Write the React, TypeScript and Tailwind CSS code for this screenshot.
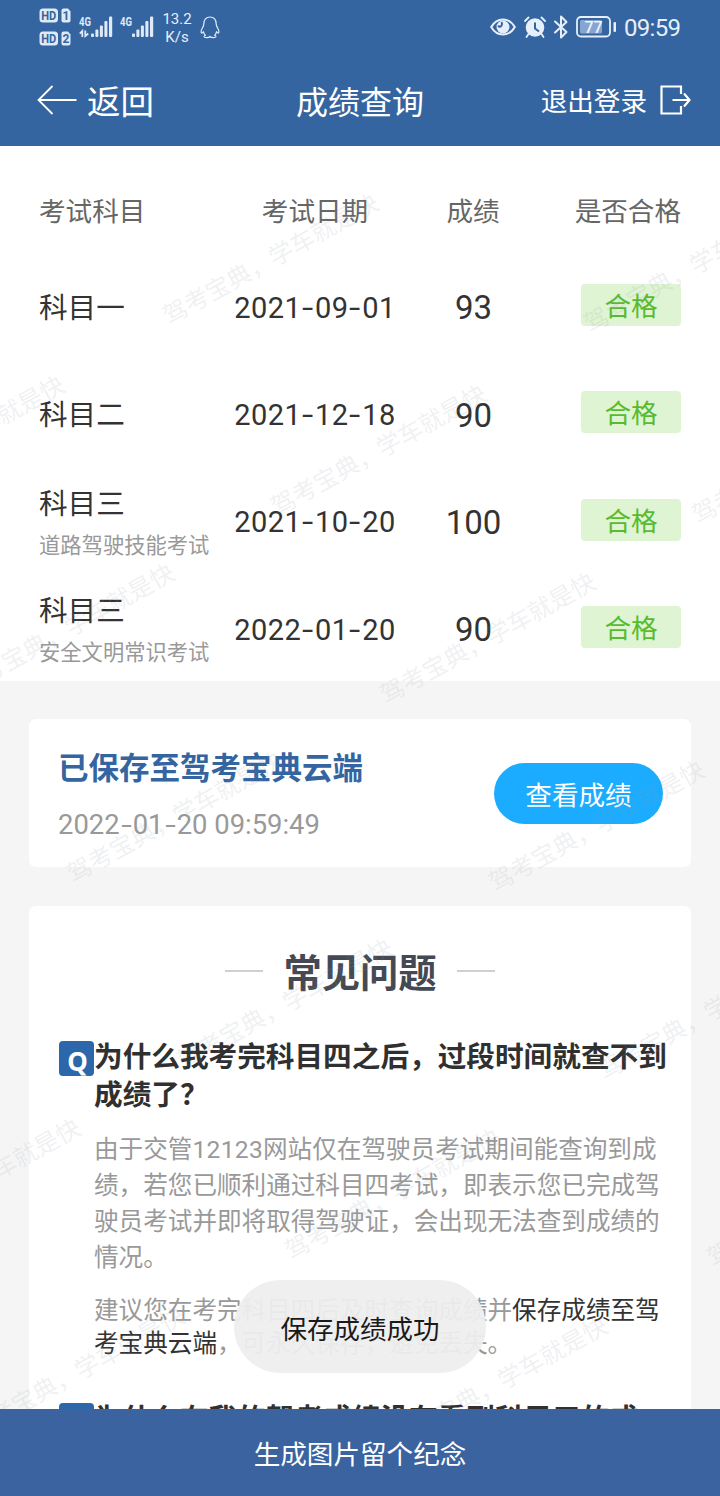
import { Fragment } from 'react';

const results = [
  { subject: '科目一', date: '2021-09-01', score: 93 },
  { subject: '科目二', date: '2021-12-18', score: 90 },
  { subject: '科目三', note: '道路驾驶技能考试', date: '2021-10-20', score: 100 },
  { subject: '科目三', note: '安全文明常识考试', date: '2022-01-20', score: 90 },
];

// Centre points of the repeated watermark text
const watermarks = [
  [270, 258], [691, 266], [-44, 440], [378, 449], [799, 457],
  [66, 628], [487, 637], [174, 816], [596, 825], [284, 1003],
  [705, 1013], [-28, 1183], [392, 1193], [814, 1200], [76, 1371], [499, 1381],
];

function HdBadge({ sim }: { sim: string }) {
  return (
    <svg width="33" height="15" viewBox="0 0 33 15" className="font-['Roboto',sans-serif] font-bold">
      <rect x="0.5" y="0.5" width="18.5" height="14" rx="3.5" fill="#dfe9f7" />
      <text x="2.3" y="12" fontSize="12.5" textLength="15" lengthAdjust="spacingAndGlyphs" fill="#3565a0">HD</text>
      <path d="M24.5 0.5h4.5l2.5 3v9a2 2 0 0 1-2 2h-5a2 2 0 0 1-2-2v-10a2 2 0 0 1 2-2z" fill="#dfe9f7" />
      <text x="27" y="12" fontSize="12" textAnchor="middle" fill="#3565a0">{sim}</text>
    </svg>
  );
}

function Signal({ data }: { data?: boolean }) {
  return (
    <svg width="35" height="24" viewBox="0 0 35 24" className="font-['Roboto',sans-serif] font-bold" fill="#dfe9f7">
      <text x="0" y="10.5" fontSize="12.5" textLength="12" lengthAdjust="spacingAndGlyphs">4G</text>
      {data && (
        <path d="M3.300 22v-6L0.800 18.600M6.300 15.500v5.500l3-2.500" fill="none" stroke="#dfe9f7" strokeWidth="1.800" />
      )}
      <rect x="12" y="18.5" width="3" height="3.5" rx="1" />
      <rect x="16.4" y="14.5" width="3" height="7.5" rx="1" />
      <rect x="20.9" y="10.5" width="3" height="11.5" rx="1" />
      <rect x="25.4" y="6" width="3" height="16" rx="1" />
      <rect x="30" y="1.5" width="3.2" height="20.5" rx="1" />
    </svg>
  );
}

function StatusBar() {
  return (
    <div className="flex h-[56px] items-start justify-between px-[39px] text-[#e6effa]">
      <div className="flex">
        <div className="mt-[8px] flex flex-col gap-[8px]">
          <HdBadge sim="1" />
          <HdBadge sim="2" />
        </div>
        <div className="ml-[7px] mt-[15px] flex gap-[6px]">
          <Signal data />
          <Signal />
        </div>
        <div className="ml-[7px] mt-[10px] w-[30px] whitespace-nowrap text-center font-['Roboto',sans-serif] text-[15px] leading-[18px]">
          13.2
          <br />
          K/s
        </div>
        <svg width="20" height="24" viewBox="0 0 20 24" className="ml-[8px] mt-[16px]" fill="none" stroke="#dfe9f7" strokeWidth="1.2" strokeLinejoin="round">
          <path d="M10 1C6 1 3.800 3.800 3.800 8c0 1.600-.6 2.600-1.400 4C1.400 13.800.800 16.200 1.500 17c.5.4 1.300-.6 1.900-1.300.3 1.700 1 2.800 2 3.700-1 .3-1.500.9-1.300 1.500.4 1.100 4.400 1 5.900-.4 1.500 1.400 5.500 1.500 5.900.4.2-.6-.3-1.200-1.300-1.500 1-.9 1.700-2 2-3.700.6.700 1.400 1.700 1.900 1.300.7-.8.1-3.200-.9-5-.8-1.400-1.400-2.400-1.400-4 0-4.200-2.200-7-6.200-7z" />
        </svg>
      </div>

      <div className="mt-[14px] flex h-[26px] items-center">
        <svg width="26" height="18" viewBox="0 0 26 18" fill="none" stroke="#e6effa" strokeWidth="2">
          <path d="M1.200 9C7-1 19-1 24.800 9 19 19 7 19 1.200 9z" />
          <circle cx="13" cy="9" r="6.500" fill="#e6effa" stroke="none" />
          <path d="M11.800 4.800a2.600 2.600 0 0 1-3.300 3.600" strokeWidth="2" stroke="#3565a0" strokeLinecap="round" />
        </svg>
        <svg width="22" height="22" viewBox="0 0 22 22" className="ml-[8px]" fill="#e6effa">
          <circle cx="11" cy="11.5" r="9.3" />
          <path d="M1 5 4.500 1.500M21 5l-3.500-3.500M4.500 18l-2 3M17.500 18l2 3" stroke="#e6effa" strokeWidth="1.8" strokeLinecap="round" />
          <path d="M11 6.500v6l4 3" fill="none" stroke="#3565a0" strokeWidth="2" />
        </svg>
        <svg width="16" height="24" viewBox="0 0 16 24" className="ml-[7px]" fill="none" stroke="#e6effa" strokeWidth="2" strokeLinejoin="round" strokeLinecap="round">
          <path d="M2 6.500 13.500 17 8 22.500v-21L13.500 7 2 17.500" />
        </svg>
        <svg width="41" height="22" viewBox="0 0 41 22" className="ml-[7px] font-['Roboto',sans-serif]">
          <rect x="1" y="1" width="33" height="19.5" rx="4" fill="none" stroke="#e6effa" strokeWidth="1.8" />
          <rect x="4" y="4" width="22" height="13.5" rx="1.5" fill="#86a5d0" />
          <rect x="37.5" y="6" width="2.5" height="10" rx="1" fill="#e6effa" />
          <text x="17.5" y="16.5" fontSize="16" fontWeight="500" textAnchor="middle" fill="#eef4fc">77</text>
        </svg>
        <span className="ml-[7px] mt-[2px] w-[57px] whitespace-nowrap font-['Roboto',sans-serif] text-[24px] leading-none tracking-[-0.7px]">09:59</span>
      </div>
    </div>
  );
}

function DateText({ value }: { value: string }) {
  return (
    <span className="whitespace-nowrap">
      {value.split('-').map((part, i) => (
        <Fragment key={i}>
          {i > 0 && <span className="inline-block w-[0.48em] scale-x-[1.4] text-center">-</span>}
          {part}
        </Fragment>
      ))}
    </span>
  );
}

function Question({ title }: { title: string }) {
  return (
    <div className="flex items-start">
      <div className="mt-[4px] flex h-[35px] w-[35px] shrink-0 items-center justify-center rounded-[4px] bg-[#2c66ab] pl-[2px] pt-[5px] font-['Noto_Sans',sans-serif] text-[26px] font-bold leading-none text-white">
        Q
      </div>
      <h3 className="-mt-[1px] w-[574px] shrink-0 break-all text-[28.65px] font-bold leading-[38px] text-[#303030]">{title}</h3>
    </div>
  );
}

export default function App() {
  return (
    <div className="relative flex h-[1496px] w-[720px] flex-col overflow-hidden bg-[#f5f5f5] font-['Noto_Sans_CJK_SC',sans-serif]">
      <header className="h-[146px] shrink-0 bg-[#3565a0] text-white">
        <StatusBar />
        <div className="grid h-[87px] grid-cols-[1fr_128px_1fr] items-center pl-[37px] pr-[29px]">
          <div className="flex items-center">
            <svg width="41" height="30" viewBox="0 0 41 30" fill="none" stroke="white" strokeWidth="1.8">
              <path d="M15.500 1 1.500 15l14 14M1.500 15H39.500" />
            </svg>
            <span className="ml-[9px] text-[33.5px] leading-none">返回</span>
          </div>
          <h1 className="-ml-[4px] whitespace-nowrap text-[32px] leading-none">成绩查询</h1>
          <div className="flex items-center justify-end">
            <span className="whitespace-nowrap pt-[2px] text-[26.6px] leading-none">退出登录</span>
            <svg width="31" height="30" viewBox="0 0 31 30" className="ml-[13px]" fill="none" stroke="white" strokeWidth="2.2">
              <path d="M21 9V1.500H1.500v27H21V21M12.500 15H29M24 8.500 29.500 15 24 21.500" />
            </svg>
          </div>
        </div>
      </header>

      {/* Scores */}
      <section className="h-[535px] shrink-0 bg-white px-[39px]">
        <div className="grid h-[106px] grid-cols-[170px_212px_104px_1fr] items-center pt-[21px] text-center text-[26.6px] text-[#666]">
          <span className="text-left">考试科目</span>
          <span>考试日期</span>
          <span>成绩</span>
          <span className="text-right">是否合格</span>
        </div>
        {results.map((r) => (
          <div key={r.date} className="grid h-[107.3px] grid-cols-[170px_212px_104px_1fr] items-center text-center text-[#333]">
            <div className={r.note ? 'pt-[5px] text-left' : 'pt-[1px] text-left'}>
              <p className="text-[28.6px] leading-[42px]">{r.subject}</p>
              {r.note && <p className="whitespace-nowrap text-[21.3px] leading-[42px] text-[#999]">{r.note}</p>}
            </div>
            <div className="pt-[6px] font-['Roboto',sans-serif] text-[29px] tracking-[0.4px]">
              <DateText value={r.date} />
            </div>
            <span className="pl-[1px] pt-[5px] font-['Roboto',sans-serif] text-[33px]">{r.score}</span>
            <span className="mb-[1px] ml-auto h-[42px] w-[100px] rounded-[4px] bg-[#def4d2] text-[26.6px] leading-[42px] text-[#58bb2e]">
              合格
            </span>
          </div>
        ))}
      </section>

      {/* Cloud save */}
      <section className="mx-[29px] mt-[38px] flex h-[148px] shrink-0 items-center justify-between rounded-[7px] bg-white pl-[29px] pr-[28px]">
        <div className="pt-[3px]">
          <h2 className="text-[30.5px] font-bold leading-[44px] text-[#3565a0]">已保存至驾考宝典云端</h2>
          <p className="mt-[17px] whitespace-pre font-['Roboto',sans-serif] text-[27.4px] leading-[40px] text-[#999]">
            <DateText value="2022-01-20" /> 09:59:49
          </p>
        </div>
        <button className="h-[61px] w-[169px] rounded-full bg-[#1cacff] pt-[1px] text-[26.6px] text-white">查看成绩</button>
      </section>

      {/* FAQ */}
      <section className="mx-[29px] mt-[39px] h-[700px] shrink-0 rounded-t-[7px] bg-white pl-[30px] pt-[37px]">
        <div className="-ml-[30px] flex items-center justify-center gap-[20px]">
          <span className="h-[2px] w-[38px] bg-[#d0d0d4]" />
          <h2 className="text-[38.3px] font-bold leading-[56px] text-[#444953]">常见问题</h2>
          <span className="h-[2px] w-[38px] bg-[#d0d0d4]" />
        </div>

        <div className="mt-[38px]">
          <Question title="为什么我考完科目四之后，过段时间就查不到成绩了？" />
          <div className="ml-[35px] w-[568px] break-all text-[24.6px] text-[#999]">
            <p className="mt-[17px] leading-[36px]">
              由于交管<span className="font-['Roboto',sans-serif] leading-none tracking-[0.3px]">12123</span>网站仅在驾驶员考试期间能查询到成
              <br />
              绩，若您已顺利通过科目四考试，即表示您已完成驾驶员考试并即将取得驾驶证，会出现无法查到成绩的情况。
            </p>
            <p className="mt-[19px] leading-[33px]">
              建议您在考完科目四后及时查询成绩并<span className="text-[#333]">保存成绩至驾考宝典云端</span>，可永久保存，避免丢失。
            </p>
          </div>
        </div>

        <div className="mt-[41px]">
          <Question title="为什么在我的驾考成绩没有看到科目三的成绩？" />
        </div>
      </section>

      {/* Watermark */}
      <div className="pointer-events-none absolute inset-0 select-none overflow-hidden">
        {watermarks.map(([x, y]) => (
          <span
            key={`${x}-${y}`}
            className="absolute -translate-x-1/2 -translate-y-1/2 -rotate-[29deg] whitespace-nowrap text-[24.2px] leading-none text-[#8c96a0]/15"
            style={{ left: x, top: y }}
          >
            驾考宝典，学车就是快
          </span>
        ))}
      </div>

      {/* Toast */}
      <div className="absolute left-[234px] top-[1280px] flex h-[93px] w-[252px] items-center justify-center rounded-full bg-[#eee]/94 pt-[2px] text-[26.5px] text-[#1a1a1a]">
        保存成绩成功
      </div>

      <button className="absolute inset-x-0 bottom-0 h-[87px] bg-[#3a63a0] text-[26.6px] text-white">
        生成图片留个纪念
      </button>
    </div>
  );
}
